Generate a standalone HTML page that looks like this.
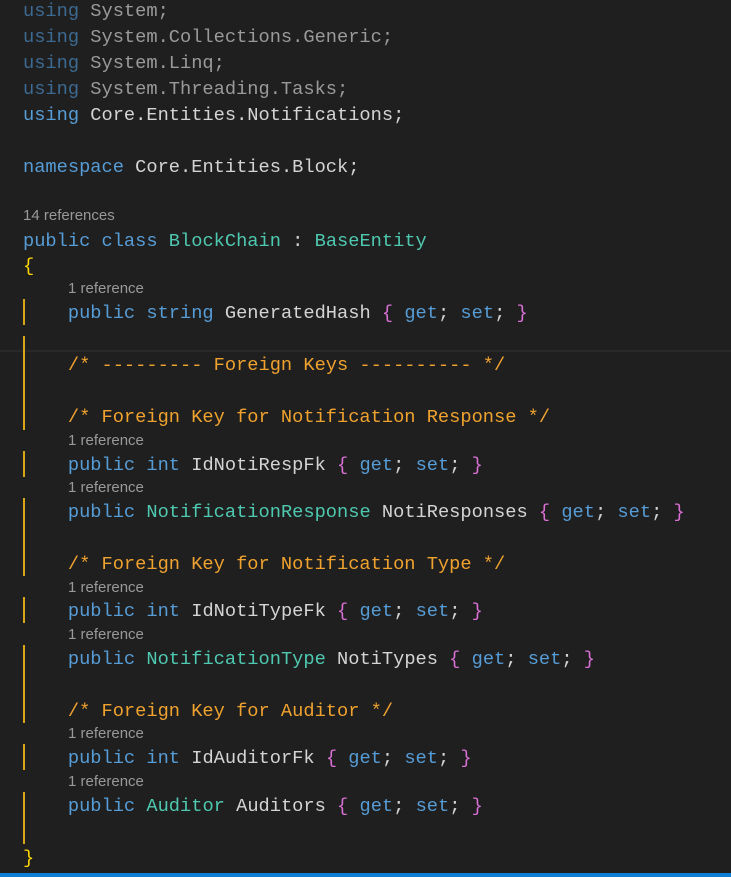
<!DOCTYPE html><html><head><style>
body{margin:0;width:731px;height:877px;background:#1f1f1f;overflow:hidden;position:relative;font-family:"Liberation Mono",monospace}
.l{position:absolute;left:23px;height:26px;line-height:26px;font-size:18.7px;color:#d4d4d4;white-space:pre;margin-top:1px}
.r{position:absolute;height:20px;line-height:20px;font-size:15px;color:#999;font-family:"Liberation Sans",sans-serif;white-space:pre}
.k{color:#569cd6}.dk{color:#3d6a92}.dt{color:#9a9a9a}.t{color:#4ec9b0}.c{color:#f0a22e}.y{color:#ffd700}.p{color:#da70d6}
.g{position:absolute;left:23px;width:2px;background:#d8a717}
</style></head><body>
<div style="position:absolute;left:0;right:0;top:350px;height:2px;background:#282828"></div>
<div class="l" style="top:-3px"><span class="dk">using</span><span class="dt"> System;</span></div>
<div class="l" style="top:23px"><span class="dk">using</span><span class="dt"> System.Collections.Generic;</span></div>
<div class="l" style="top:49px"><span class="dk">using</span><span class="dt"> System.Linq;</span></div>
<div class="l" style="top:75px"><span class="dk">using</span><span class="dt"> System.Threading.Tasks;</span></div>
<div class="l" style="top:101px"><span class="k">using</span> Core.Entities.Notifications;</div>
<div class="l" style="top:153px"><span class="k">namespace</span> Core.Entities.Block;</div>
<div class="r" style="left:23px;top:206px">14 references</div>
<div class="l" style="top:227px"><span class="k">public class</span> <span class="t">BlockChain</span> : <span class="t">BaseEntity</span></div>
<div class="l" style="top:252px"><span class="y">{</span></div>
<div class="r" style="left:68px;top:279px">1 reference</div>
<div class="l" style="top:299px">    <span class="k">public string</span> GeneratedHash <span class="p">{</span> <span class="k">get</span>; <span class="k">set</span>; <span class="p">}</span></div>
<div class="l c" style="top:351px">    /* --------- Foreign Keys ---------- */</div>
<div class="l c" style="top:403px">    /* Foreign Key for Notification Response */</div>
<div class="r" style="left:68px;top:431px">1 reference</div>
<div class="l" style="top:451px">    <span class="k">public int</span> IdNotiRespFk <span class="p">{</span> <span class="k">get</span>; <span class="k">set</span>; <span class="p">}</span></div>
<div class="r" style="left:68px;top:478px">1 reference</div>
<div class="l" style="top:498px">    <span class="k">public</span> <span class="t">NotificationResponse</span> NotiResponses <span class="p">{</span> <span class="k">get</span>; <span class="k">set</span>; <span class="p">}</span></div>
<div class="l c" style="top:550px">    /* Foreign Key for Notification Type */</div>
<div class="r" style="left:68px;top:578px">1 reference</div>
<div class="l" style="top:597px">    <span class="k">public int</span> IdNotiTypeFk <span class="p">{</span> <span class="k">get</span>; <span class="k">set</span>; <span class="p">}</span></div>
<div class="r" style="left:68px;top:625px">1 reference</div>
<div class="l" style="top:645px">    <span class="k">public</span> <span class="t">NotificationType</span> NotiTypes <span class="p">{</span> <span class="k">get</span>; <span class="k">set</span>; <span class="p">}</span></div>
<div class="l c" style="top:697px">    /* Foreign Key for Auditor */</div>
<div class="r" style="left:68px;top:724px">1 reference</div>
<div class="l" style="top:744px">    <span class="k">public int</span> IdAuditorFk <span class="p">{</span> <span class="k">get</span>; <span class="k">set</span>; <span class="p">}</span></div>
<div class="r" style="left:68px;top:772px">1 reference</div>
<div class="l" style="top:792px">    <span class="k">public</span> <span class="t">Auditor</span> Auditors <span class="p">{</span> <span class="k">get</span>; <span class="k">set</span>; <span class="p">}</span></div>
<div class="l" style="top:844px"><span class="y">}</span></div>
<div class="g" style="top:299px;height:26px"></div>
<div class="g" style="top:336px;height:94px"></div>
<div class="g" style="top:451px;height:26px"></div>
<div class="g" style="top:498px;height:78px"></div>
<div class="g" style="top:597px;height:26px"></div>
<div class="g" style="top:645px;height:78px"></div>
<div class="g" style="top:744px;height:26px"></div>
<div class="g" style="top:792px;height:52px"></div>
<div style="position:absolute;left:0;right:0;bottom:0;height:4px;background:#0e7fd4"></div>
</body></html>
